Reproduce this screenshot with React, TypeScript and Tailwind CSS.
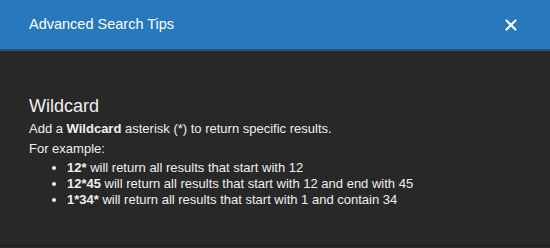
import { X } from 'lucide-react';

export default function App() {
  return (
    <div className="w-[550px] h-[248px] bg-[#282828] font-['Liberation_Sans',Arial,sans-serif] flex flex-col pb-[2px]">
      {/* Header */}
      <header className="h-[51px] shrink-0 bg-[#2778bc] border-b-2 border-[#28506f] flex items-center justify-between pl-[29px] pr-[30px]">
        <h2 className="text-[14.5px] text-white">Advanced Search Tips</h2>
        <button className="text-white">
          <X className="w-[18px] h-[18px]" strokeWidth={3} />
        </button>
      </header>

      {/* Body */}
      <main className="flex-1 px-[29px] pt-[44px] text-[13px] leading-[16px] text-[#efefef] border-b border-[#161616]">
        <h3 className="text-[18px] leading-[22px] mb-[4px]">Wildcard</h3>
        <p>
          Add a <b>Wildcard</b> asterisk (*) to return specific results.
        </p>
        <p className="mt-[4px]">For example:</p>
        <ul className="list-disc pl-[38px] mt-[3px] leading-[16px]">
          <li>
            <b>12*</b> will return all results that start with 12
          </li>
          <li>
            <b>12*45</b> will return all results that start with 12 and end with 45
          </li>
          <li>
            <b>1*34*</b> will return all results that start with 1 and contain 34
          </li>
        </ul>
      </main>
    </div>
  );
}
